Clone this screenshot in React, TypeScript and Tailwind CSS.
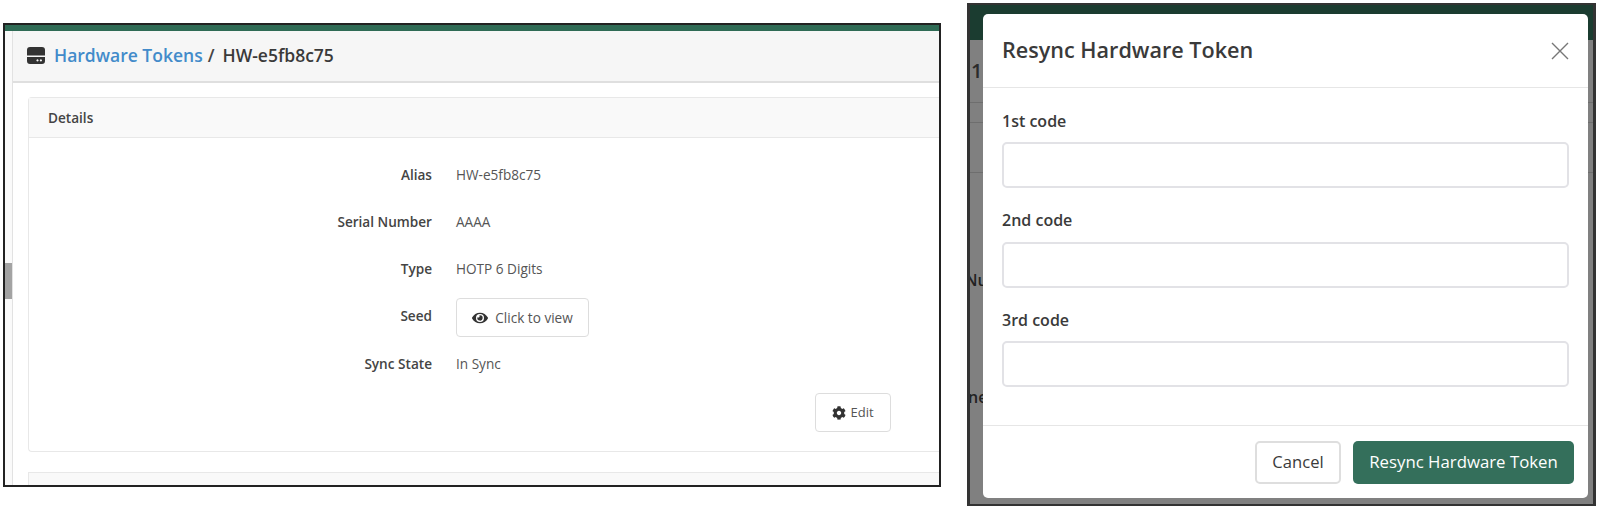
import { FaCog, FaEye } from "react-icons/fa";

const font = "font-['Open_Sans',sans-serif]";

const details = [
  { label: "Alias", value: "HW-e5fb8c75" },
  { label: "Serial Number", value: "AAAA" },
  { label: "Type", value: "HOTP 6 Digits" },
];

function DetailRow({ label, children }: { label: string; children: React.ReactNode }) {
  return (
    <div className="flex h-[47px] items-center gap-[24px]">
      <div className="w-[403px] text-right text-[13.6px] font-semibold text-[#444]">{label}</div>
      <div className="text-[13.6px] text-[#555]">{children}</div>
    </div>
  );
}

function HddIcon() {
  return (
    <svg viewBox="0 0 18 17" className="h-[17px] w-[18px] text-[#333]" fill="currentColor">
      <path d="M3 0h12a3 3 0 0 1 3 3v5.6H0V3a3 3 0 0 1 3-3z" />
      <path
        fillRule="evenodd"
        d="M0 10h18v4a3 3 0 0 1-3 3H3a3 3 0 0 1-3-3v-4zm11.6 3.4a1.1 1.1 0 1 0 0 .01zm3.4 0a1.1 1.1 0 1 0 0 .01z"
      />
    </svg>
  );
}

function TokenDetails() {
  return (
    <div className="ml-[3px] mt-[23px] h-[464px] w-[938px] shrink-0 overflow-hidden border-2 border-[#222] bg-white">
      <div className="h-[6px] bg-[#2f6b55]" />
      <div className="flex h-full">
        <div className="relative w-[8px] shrink-0 border-r border-[#e2e2e2] bg-[#fafafa]">
          {/* resize handle */}
          <div className="absolute left-0 top-[232px] h-[36px] w-[7px] bg-[#a3a3a3]" />
        </div>
        <div className="min-w-0 flex-1">
          {/* Page header */}
          <div className="flex h-[52px] items-center border-b-2 border-[#dfdfdf] bg-[#f6f6f6] pb-[2px] pl-[14px]">
            <HddIcon />
            <a className="ml-[9px] text-[17.5px] font-semibold text-[#428bca]">Hardware Tokens</a>
            <span className="ml-[5px] text-[17.5px] font-semibold text-[#444]">/</span>
            <span className="ml-[8px] text-[17.5px] font-semibold text-[#3a3a3a]">HW-e5fb8c75</span>
          </div>

          {/* Details card */}
          <div className="ml-[15px] mt-[14px] h-[355px] rounded-tl-[4px] rounded-bl-[4px] border-y border-l border-[#e8e8e8]">
            <div className="flex h-[40px] items-center border-b border-[#e8e8e8] bg-[#f9f9f9] pl-[19px] pt-[2px] text-[13.6px] font-semibold text-[#444]">
              Details
            </div>
            <div className="pt-[14px]">
              {details.map((d) => (
                <DetailRow key={d.label} label={d.label}>
                  {d.value}
                </DetailRow>
              ))}
              <DetailRow label="Seed">
                <button className="mt-[2px] flex h-[39px] w-[133px] items-center justify-center gap-[7px] rounded-[4px] border border-[#ddd] bg-white pt-[1px] text-[13.6px] text-[#555]">
                  <FaEye className="h-[16px] w-[16px] text-[#333]" />
                  Click to view
                </button>
              </DetailRow>
              <div className="mt-[1px]">
                <DetailRow label="Sync State">In Sync</DetailRow>
              </div>
              <div className="mt-[5px] flex justify-end pr-[48px]">
                <button className="flex h-[39px] w-[76px] items-center justify-center gap-[4px] rounded-[4px] border border-[#ddd] bg-white text-[13px] text-[#555]">
                  <FaCog className="h-[14px] w-[14px] text-[#333]" />
                  Edit
                </button>
              </div>
            </div>
          </div>

          {/* Next card, cut off by the frame */}
          <div className="ml-[15px] mt-[20px] h-[40px] border-l border-t border-[#e8e8e8] bg-[#f9f9f9]" />
        </div>
      </div>
    </div>
  );
}

function CodeField({ label }: { label: string }) {
  return (
    <div>
      <label className="flex h-[25px] items-center pt-[2px] text-[16px] font-semibold text-[#3a3a3a]">{label}</label>
      <input className="mt-[10px] block h-[46px] w-full rounded-[5px] border-2 border-[#e2e2e6] bg-white" />
    </div>
  );
}

function ResyncModal() {
  return (
    <div className="relative ml-[26px] mt-[3px] h-[503px] w-[629px] shrink-0 overflow-hidden border-x-[3px] border-y-2 border-[#333] bg-[#808080]">
      {/* Dimmed page behind the modal */}
      <div className="h-[35px] bg-[#1b3c30]" />
      <div className="flex h-[63px] items-center border-b border-[#6e6e6e] pl-[1px] text-[20px] font-semibold text-[#2b2b2b]">
        1
      </div>
      <div className="h-[20px] border-b border-[#6e6e6e]" />
      <div className="h-[50px] border-b border-[#6e6e6e]" />
      <div className="ml-[-5px] mt-[96px] text-[16px] font-semibold leading-[22px] text-[#222]">Nu</div>
      <div className="ml-[-2px] mt-[95px] text-[16px] font-semibold leading-[22px] text-[#222]">ne</div>

      <div className="absolute bottom-[6px] left-[13px] top-[9px] flex w-[605px] flex-col rounded-[5px] bg-white">
        <div className="flex h-[74px] shrink-0 items-center justify-between border-b border-[#e6e6e6] pl-[19px] pr-[19px]">
          <h2 className="text-[21.6px] font-semibold text-[#3a3a3a]">Resync Hardware Token</h2>
          <svg viewBox="0 0 18 18" className="h-[18px] w-[18px] text-[#777]" fill="none" stroke="currentColor" strokeWidth="1.4">
            <path d="M1 1l16 16M17 1L1 17" />
          </svg>
        </div>
        <div className="flex flex-1 flex-col gap-[18.5px] pl-[19px] pr-[19px] pt-[19px]">
          <CodeField label="1st code" />
          <CodeField label="2nd code" />
          <CodeField label="3rd code" />
        </div>
        <div className="flex h-[73px] shrink-0 items-center justify-end gap-[12px] border-t border-[#e6e6e6] pr-[14px]">
          <button className="h-[43px] w-[86px] rounded-[5px] border-2 border-[#dedede] bg-white text-[16.6px] text-[#3a3a3a]">
            Cancel
          </button>
          <button className="h-[43px] w-[221px] rounded-[5px] bg-[#346f5b] text-[16.8px] text-white">
            Resync Hardware Token
          </button>
        </div>
      </div>
    </div>
  );
}

export default function App() {
  return (
    <div className={`flex h-[510px] w-[1600px] items-start overflow-hidden bg-white ${font}`}>
      <TokenDetails />
      <ResyncModal />
    </div>
  );
}
